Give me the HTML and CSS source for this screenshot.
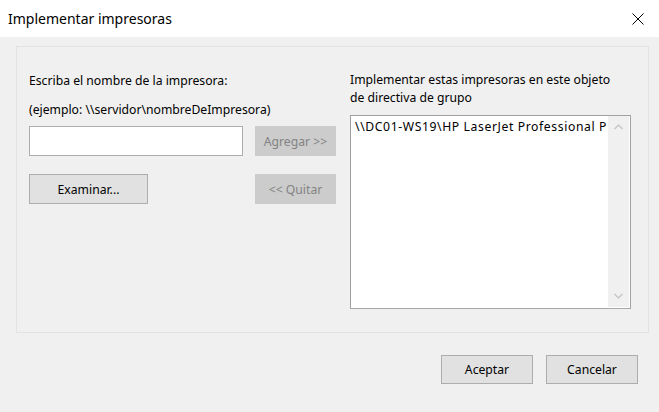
FILE: index.html
```html
<!DOCTYPE html>
<html lang="es">
<head>
<meta charset="utf-8">
<title>Implementar impresoras</title>
<link rel="stylesheet" href="styles.css">
</head>
<body>
<div class="dialog">
  <div class="titlebar">
    <span class="title">Implementar impresoras</span>
    <svg class="close" width="12" height="12" viewBox="0 0 12 12"><path d="M0.5 0.5 L11.5 11.5 M11.5 0.5 L0.5 11.5" stroke="#000" stroke-width="1" fill="none"/></svg>
  </div>
  <div class="body">
    <div class="panel">
      <div class="col-left">
        <div class="label">Escriba el nombre de la impresora:</div>
        <div class="label label2">(ejemplo: \\servidor\nombreDeImpresora)</div>
        <div class="row row1">
          <div class="input"></div>
          <div class="btn disabled">Agregar &gt;&gt;</div>
        </div>
        <div class="row row2">
          <div class="btn examinar">Examinar...</div>
          <div class="btn disabled">&lt;&lt; Quitar</div>
        </div>
      </div>
      <div class="col-right">
        <div class="label">Implementar estas impresoras en este objeto<br>de directiva de grupo</div>
        <div class="listbox">
          <div class="items"><div class="item">\\DC01-WS19\HP LaserJet Professional P</div></div>
          <div class="scroll">
            <svg width="9" height="6" viewBox="0 0 9 6"><path d="M0.5 5 L4.5 1 L8.5 5" stroke="#c2c2c2" stroke-width="1.2" fill="none"/></svg>
            <svg width="9" height="6" viewBox="0 0 9 6"><path d="M0.5 1 L4.5 5 L8.5 1" stroke="#c2c2c2" stroke-width="1.2" fill="none"/></svg>
          </div>
        </div>
      </div>
    </div>
    <div class="footer">
      <div class="btn ok">Aceptar</div>
      <div class="btn ok">Cancelar</div>
    </div>
  </div>
</div>
</body>
</html>
```
FILE: styles.css
```css
html, body {
  margin: 0;
  padding: 0;
  background: #f0f0f0;
}
body {
  font-family: "Noto Sans", "Liberation Sans", sans-serif;
  font-size: 12.2px;
  color: #000;
  width: 659px;
  height: 412px;
  overflow: hidden;
}
.titlebar {
  height: 37px;
  background: #fff;
  display: flex;
  align-items: center;
  justify-content: space-between;
  padding: 0 15px 0 8px;
}
.title {
  font-size: 14px;
  color: #000;
}
.close {
  display: block;
}
.body {
  padding: 9px 10px 0 16px;
}
.panel {
  height: 285px;
  border: 1px solid #e3e3e3;
  display: flex;
  padding: 0 0 0 12px;
}
.label {
  line-height: 18px;
}
.col-left {
  width: 307px;
  padding-top: 25px;
}
.label2 {
  margin-top: 11px;
}
.row {
  display: flex;
  justify-content: space-between;
}
.row1 { margin-top: 7px; }
.row2 { margin-top: 18px; }
.input {
  width: 212px;
  height: 28px;
  background: #fff;
  border: 1px solid #adadad;
}
.btn {
  display: flex;
  align-items: center;
  justify-content: center;
  box-sizing: border-box;
  height: 30px;
  border: 1px solid #adadad;
  background: #e1e1e1;
}
.disabled {
  width: 81px;
  background: #cccccc;
  border-color: #cccccc;
  color: #838383;
}
.examinar {
  width: 119px;
}
.col-right {
  margin-left: 14px;
  padding-top: 24px;
}
.listbox {
  margin-top: 8px;
  width: 281px;
  height: 194px;
  box-sizing: border-box;
  border: 1px solid #a0a0a0;
  border-bottom-color: #a8a8a8;
  background: #fff;
  display: flex;
}
.items {
  flex: 1;
  padding: 3px 0 0 4px;
  overflow: hidden;
  white-space: nowrap;
}
.item {
  line-height: 16px;
  letter-spacing: 0.6px;
}
.scroll {
  width: 21px;
  margin: 0 1px 1px 0;
  background: #f0f0f0;
  display: flex;
  flex-direction: column;
  justify-content: space-between;
  align-items: center;
  padding: 8px 0 8px;
}
.scroll svg { display: block; }
.footer {
  display: flex;
  justify-content: flex-end;
  gap: 13px;
  margin-top: 22px;
  padding-right: 11px;
}
.ok {
  width: 92px;
  height: 29px;
}
```
